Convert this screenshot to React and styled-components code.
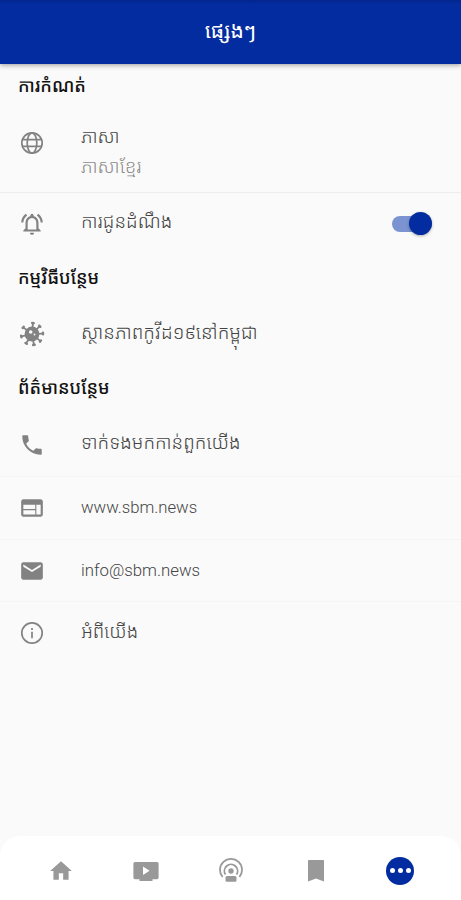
import styled, { createGlobalStyle } from "styled-components";
import {
  MdEmail,
  MdHome,
  MdOutlineNotificationsActive,
  MdPhone,
  MdWeb,
} from "react-icons/md";

const blue = "#032ca0";

const GlobalStyle = createGlobalStyle`
  * {
    box-sizing: border-box;
  }
  body {
    margin: 0;
    background: #fafafa;
    font-family: Roboto, "Noto Sans Khmer", "Khmer OS", "Noto Sans", sans-serif;
  }
`;

const Screen = styled.div`
  display: flex;
  flex-direction: column;
  width: 461px;
  height: 900px;
  overflow: hidden;
  background: #fafafa;
`;

const Header = styled.header`
  flex: none;
  display: flex;
  align-items: center;
  justify-content: center;
  height: 64px;
  padding-bottom: 2px;
  background: linear-gradient(#02258c, ${blue} 4px);
  box-shadow: 0 1px 5px rgba(0, 0, 0, 0.4);
  h1 {
    margin: 0;
    color: #fff;
    font-size: 21px;
    font-weight: 400;
    line-height: 30px;
    white-space: nowrap;
  }
`;

const Main = styled.main`
  flex: 1;
`;

const SectionTitle = styled.h2`
  display: flex;
  align-items: center;
  height: ${(props) => props.$height}px;
  margin: 0;
  padding: 0 0 ${(props) => props.$lift}px 18px;
  color: #111;
  font-size: 17.9px;
  font-weight: 500;
  line-height: 30px;
  white-space: nowrap;
`;

const Row = styled.div`
  display: flex;
  align-items: center;
  height: ${(props) => props.$height}px;
  padding: 0 29px 0 19px;
  border-bottom: 1px solid
    ${(props) => (props.$divider ? props.$divider : "transparent")};
`;

const RowIcon = styled.span`
  display: flex;
  width: 62px;
  margin-top: ${(props) => props.$drop || 0}px;
  color: #828282;
  svg {
    width: 26px;
    height: 26px;
  }
`;

const Labels = styled.div`
  flex: 1;
  padding: ${(props) => (props.$lift < 0 ? -props.$lift : 0)}px 0
    ${(props) => (props.$lift > 0 ? props.$lift : 0)}px;
`;

const Label = styled.div`
  color: ${(props) => (props.$muted ? "#8c8c8c" : "#444")};
  font-size: ${(props) => props.$size}px;
  font-weight: 300;
  line-height: 30px;
  white-space: nowrap;
`;

const Switch = styled.div`
  display: flex;
  align-items: center;
  justify-content: flex-end;
  width: 40px;
  height: 16px;
  border-radius: 8px;
  background: #7b93d0;
`;

const Thumb = styled.span`
  flex: none;
  width: 23px;
  height: 23px;
  border-radius: 50%;
  background: ${blue};
  box-shadow: 0 1px 3px rgba(0, 0, 0, 0.3);
`;

const BottomNav = styled.nav`
  flex: none;
  display: flex;
  justify-content: space-between;
  align-items: center;
  height: 64px;
  padding: 5px 47px 0 46px;
  border-radius: 20px 20px 0 0;
  background: #fff;
  color: #999;
`;

const NavItem = styled.a`
  display: flex;
  align-items: center;
  justify-content: center;
  width: 30px;
  height: 30px;
  svg {
    flex: none;
  }
`;

const MoreButton = styled(NavItem)`
  gap: 3px;
  width: 28px;
  height: 28px;
  border-radius: 50%;
  background: ${blue};
  span {
    width: 5px;
    height: 5px;
    border-radius: 50%;
    background: #fff;
  }
`;

function GlobeIcon() {
  return (
    <svg viewBox="0 0 26 26" fill="none" stroke="currentColor" strokeWidth="1.7">
      <circle cx="13" cy="13" r="10.2" />
      <ellipse cx="13" cy="13" rx="4.8" ry="10.2" />
      <path d="M3.600 9.600h18.800M3.600 16.400h18.800" />
    </svg>
  );
}

function InfoIcon() {
  return (
    <svg viewBox="0 0 26 26" fill="none" stroke="currentColor" strokeWidth="1.7">
      <circle cx="13" cy="13" r="10.2" />
      <path d="M13 11.800v6.400M13 8v2" />
    </svg>
  );
}

function VirusIcon() {
  const angles = [5, 45, 88, 130, 170, 212, 257, 307];
  return (
    <svg viewBox="0 0 26 26" fill="currentColor">
      {angles.map((angle) => (
        <g key={angle} transform={`rotate(${angle} 13 13)`}>
          <path d="M12.100 2h1.800v6h-1.800z" />
          <rect x="11" y="0.800" width="4" height="2.400" rx="1.200" />
        </g>
      ))}
      <path
        fillRule="evenodd"
        d="M13 5.600a7.400 7.400 0 1 0 0 14.800 7.400 7.400 0 0 0 0-14.800zM11.700 9.200a1.800 1.800 0 1 1 0 3.600 1.800 1.800 0 0 1 0-3.600zM15.500 12.600a.9.9 0 1 1 0 1.800.9.9 0 0 1 0-1.800z"
      />
    </svg>
  );
}

function VideoIcon() {
  return (
    <svg width="26" height="22" viewBox="0 0 26 22" fill="currentColor">
      <path
        fillRule="evenodd"
        d="M2 2h22a1.600 1.600 0 0 1 1.600 1.600v14a1.600 1.600 0 0 1-1.600 1.600h-4.500V21h-13v-1.800H2a1.600 1.600 0 0 1-1.600-1.600v-14A1.600 1.600 0 0 1 2 2zM10 6.500v8.400l6.600-4.200z"
      />
    </svg>
  );
}

function PodcastIcon() {
  return (
    <svg width="26" height="26" viewBox="0 0 26 26" fill="none" stroke="currentColor">
      <path d="M4.600 19a11 11 0 1 1 16.800 0" strokeWidth="1.800" />
      <path d="M7.500 16.600a6.600 6.600 0 1 1 11 0" strokeWidth="1.800" />
      <circle cx="13" cy="13" r="2.700" fill="currentColor" stroke="none" />
      <rect x="7.500" y="18" width="11" height="5.800" rx="1.500" fill="currentColor" stroke="none" />
    </svg>
  );
}

function BookmarkIcon() {
  return (
    <svg width="16" height="22" viewBox="0 0 16 22" fill="currentColor">
      <path d="M1 0h14a1 1 0 0 1 1 1v20.500l-8-3-8 3V1a1 1 0 0 1 1-1z" />
    </svg>
  );
}

function ListRow({ icon, label, sub, size = 18.9, height = 62, lift = 3, drop, divider, children }) {
  return (
    <Row $height={height} $divider={divider}>
      <RowIcon $drop={drop}>{icon}</RowIcon>
      <Labels $lift={lift}>
        <Label $size={size}>{label}</Label>
        {sub && (
          <Label $size={size} $muted>
            {sub}
          </Label>
        )}
      </Labels>
      {children}
    </Row>
  );
}

function App() {
  return (
    <Screen>
      <GlobalStyle />
      <Header>
        <h1>ផ្សេងៗ</h1>
      </Header>
      <Main>
        <SectionTitle $height={44} $lift={0}>ការកំណត់</SectionTitle>
        <ListRow
          icon={<GlobeIcon />}
          label="ភាសា"
          sub="ភាសាខ្មែរ"
          height={85}
          lift={-3}
          drop={-14}
          divider="#ededed"
        />
        <ListRow icon={<MdOutlineNotificationsActive />} label="ការជូនដំណឹង">
          <Switch>
            <Thumb />
          </Switch>
        </ListRow>
        <SectionTitle $height={47} $lift={2}>កម្មវិធីបន្ថែម</SectionTitle>
        <ListRow
          icon={<VirusIcon />}
          label="ស្ថានភាពកូវីដ១៩នៅកម្ពុជា"
          size={19}
          height={65}
        />
        <SectionTitle $height={46} $lift={4}>ព័ត៌មានបន្ថែម</SectionTitle>
        <ListRow icon={<MdPhone />} label="ទាក់ទងមកកាន់ពួកយើង" height={64} divider="#f5f5f5" />
        <ListRow icon={<MdWeb />} label="www.sbm.news" size={16.7} height={63} lift={1} divider="#f3f3f3" />
        <ListRow icon={<MdEmail />} label="info@sbm.news" size={16.8} lift={2} divider="#f5f5f5" />
        <ListRow icon={<InfoIcon />} label="អំពីយើង" size={18.7} height={63} />
      </Main>
      <BottomNav>
        <NavItem>
          <MdHome size={26} />
        </NavItem>
        <NavItem>
          <VideoIcon />
        </NavItem>
        <NavItem>
          <PodcastIcon />
        </NavItem>
        <NavItem>
          <BookmarkIcon />
        </NavItem>
        <MoreButton>
          <span />
          <span />
          <span />
        </MoreButton>
      </BottomNav>
    </Screen>
  );
}

export default App;
